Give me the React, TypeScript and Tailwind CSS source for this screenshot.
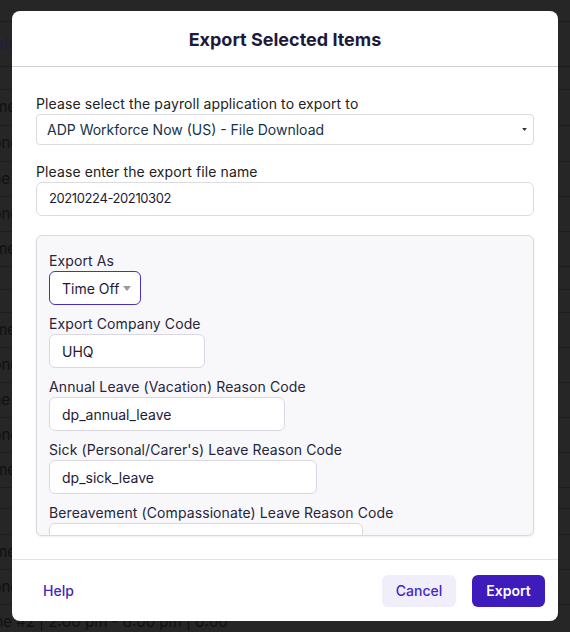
import React from "react";

const bgRows: { h: number; text?: string; accent?: boolean }[] = [
  { h: 22 },
  { h: 45, text: "Selected", accent: true },
  { h: 23 },
  { h: 36, text: "Home" },
  { h: 36, text: "Phone" },
  { h: 35, text: "Zone #1" },
  { h: 35, text: "Phone" },
  { h: 35, text: "Home" },
  { h: 23 },
  { h: 23 },
  { h: 35, text: "Home" },
  { h: 35, text: "Phone" },
  { h: 35, text: "Zone #1" },
  { h: 35, text: "Phone" },
  { h: 35, text: "Home" },
  { h: 21 },
  { h: 26 },
  { h: 35, text: "Home" },
  { h: 35, text: "Phone" },
  { h: 35, text: "Zone #2 | 2:00 pm - 6:00 pm | 0:00" },
];

function Caret({ className }: { className?: string }) {
  return (
    <svg viewBox="0 0 8 5" className={className} fill="currentColor">
      <path d="M0 0h8L4 5z" />
    </svg>
  );
}

function Field({ label, value, width }: { label: string; value: string; width: string }) {
  return (
    <div className="flex flex-col">
      <label className="h-5 leading-5 text-[14px] tracking-[0.1px] text-[#26253a]">{label}</label>
      <div
        className={`h-[34px] ${width} shrink-0 rounded-[6px] border border-[#d9d8e0] bg-white px-3 flex items-center text-[14px] text-[#1d1b38]`}
      >
        {value}
      </div>
    </div>
  );
}

export default function App() {
  return (
    <div
      className="relative h-[632px] w-[570px] overflow-hidden bg-[#262626]"
      style={{ fontFamily: "Inter, 'Noto Sans', sans-serif" }}
    >
      {/* page behind the dimmed overlay */}
      <div className="flex flex-col">
        {bgRows.map((r, i) => (
          <div
            key={i}
            style={{ height: r.h }}
            className="flex items-center border-b border-[#1e1e1e] overflow-hidden whitespace-nowrap"
          >
            {r.text && (
              <span
                className={`text-[15px] ${r.accent ? "text-[#1f1c3d] -ml-[14px]" : "text-[#101010]"} ${
                  r.text.startsWith("Zone #2") ? "-ml-[24px]" : r.accent ? "" : "-ml-[26px]"
                }`}
              >
                {r.text}
              </span>
            )}
          </div>
        ))}
      </div>

      {/* modal */}
      <div className="absolute left-[12px] top-[11px] flex h-[610px] w-[546px] flex-col rounded-[8px] bg-white">
        <div className="flex h-[56px] shrink-0 items-center justify-center border-b border-[#cfcfd4] pt-[2px]">
          <h2 className="text-[18px] font-bold text-[#1d1a3b]">Export Selected Items</h2>
        </div>

        <div className="flex flex-1 flex-col px-6 pt-[27px] pb-[23px]">
          <label className="h-5 leading-5 text-[14px] tracking-[0.1px] text-[#222]">
            Please select the payroll application to export to
          </label>
          <div className="flex h-[31px] items-center justify-between rounded-[4px] border border-[#dcdce0] bg-white pl-[10px] pr-[6px] text-[14px] text-[#16324a]">
            <span>ADP Workforce Now (US) - File Download</span>
            <Caret className="h-[3px] w-[5px] text-[#333]" />
          </div>

          <label className="mt-[17px] h-5 leading-5 text-[14px] tracking-[0.1px] text-[#222]">
            Please enter the export file name
          </label>
          <div className="flex h-[34px] items-center rounded-[6px] border border-[#dcdce0] bg-white px-3 text-[13px] tracking-[-0.4px] text-[#1d1b38]">
            20210224-20210302
          </div>

          <div className="mt-[19px] h-[301px] overflow-hidden rounded-[6px] border border-[#d8d8de] bg-[#f8f8fb] pl-[12px] pt-[15px] shadow-[0_1px_2px_rgba(0,0,0,0.08)]">
            <div className="flex flex-col gap-[9px]">
              <div className="flex flex-col">
                <label className="h-5 leading-5 text-[14px] tracking-[0.1px] text-[#26253a]">Export As</label>
                <div className="flex h-[34px] w-[92px] items-center justify-between rounded-[6px] border border-[#4a2fc4] bg-white pl-3 pr-[9px] text-[14px] text-[#1d1b38]">
                  <span>Time Off</span>
                  <Caret className="h-[5px] w-[8px] text-[#9a9a9f]" />
                </div>
              </div>
              <Field label="Export Company Code" value="UHQ" width="w-[156px]" />
              <Field label="Annual Leave (Vacation) Reason Code" value="dp_annual_leave" width="w-[236px]" />
              <Field label="Sick (Personal/Carer's) Leave Reason Code" value="dp_sick_leave" width="w-[268px]" />
              <Field label="Bereavement (Compassionate) Leave Reason Code" value="" width="w-[314px]" />
            </div>
          </div>
        </div>

        <div className="flex h-[62px] shrink-0 items-center border-t border-[#e2e2e6] pl-6 pr-[13px]">
          <button className="px-[7px] text-[14px] font-medium text-[#4427c0]">Help</button>
          <button className="ml-auto h-[32px] w-[74px] rounded-[6px] bg-[#f0eefa] text-[14px] font-medium text-[#4427c0]">
            Cancel
          </button>
          <button className="ml-4 h-[32px] w-[73px] rounded-[6px] bg-[#3d1cbb] text-[14px] font-semibold text-white">
            Export
          </button>
        </div>
      </div>
    </div>
  );
}
